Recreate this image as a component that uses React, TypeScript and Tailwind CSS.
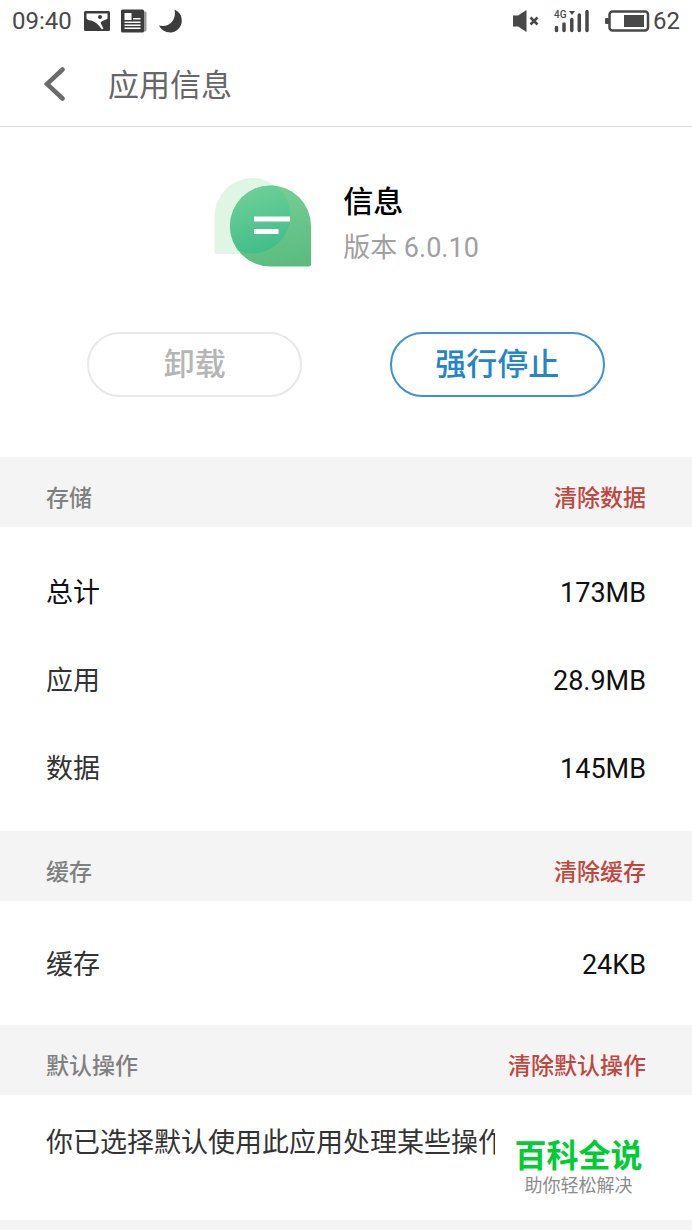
import clsx from 'clsx'
import { ReactNode } from 'react'

type StorageItem = {
  label: string
  value: string
  strong?: boolean
}

const storageItems: StorageItem[] = [
  { label: '总计', value: '173MB', strong: true },
  { label: '应用', value: '28.9MB' },
  { label: '数据', value: '145MB' },
]

const cacheItems: StorageItem[] = [
  { label: '缓存', value: '24KB' },
]

function StatusBar () {
  return (
    <div className="flex h-[42px] items-center justify-between px-3 text-[24px] leading-[42px] text-[#484848]">
      <div className="flex items-center">
        <span>09:40</span>
        <svg className="ml-3" width="26" height="22" viewBox="0 0 26 22" aria-hidden="true">
          <rect x="0" y="1" width="26" height="20" rx="1.5" fill="#3c3c3c" />
          <path d="M2.5 3.5h21v5.300l-6 2.700q-1.200 0.600-0.600 1.900l2.600 5.400-1.800 0.400C14.500 14.500 10.500 11 6.500 10.500q-2.500-0.300-4-1.700z" fill="#fff" />
          <circle cx="16" cy="7" r="2" fill="#3c3c3c" />
        </svg>
        <svg className="ml-[11px]" width="26" height="24" viewBox="0 0 26 24" aria-hidden="true">
          <path d="M22 2.500h2.500a1 1 0 0 1 1 1V21a1.500 1.500 0 0 1-1.500 1.500h-3z" fill="#9b9b9b" />
          <rect x="0" y="0.500" width="23" height="23" rx="1.500" fill="#3c3c3c" />
          <path d="M3.500 4h7v7h-7zM12 9h7.500v1.500H12zM3.500 12.500h16V14h-16zM3.500 15.500h16V17h-16zM3.500 18.500h16V20h-16z" fill="#fff" />
        </svg>
        <svg className="ml-3" width="24" height="24" viewBox="0 0 24 24" aria-hidden="true">
          <path d="M15.500 0.500A12.300 12.300 0 0 1 22.800 11.500A12 12 0 0 1 11.500 23.500C6 23.500 2 20.500 0 16.500C5 17.800 10 16.500 13 12.800C15.800 9.300 16.500 5 15.500 0.500z" fill="#3c3c3c" />
        </svg>
      </div>
      <div className="flex items-center">
        <svg width="27" height="24" viewBox="0 0 27 24" aria-hidden="true">
          <path d="M1 6.500h5L14.500 1v22L6 17.500H1z" fill="#484848" />
          <path d="M18.500 8.500l7 7M25.500 8.500l-7 7" stroke="#484848" strokeWidth="2.500" />
        </svg>
        <svg className="ml-[15px]" width="36" height="24" viewBox="0 0 36 24" aria-hidden="true">
          <text x="0" y="8.500" fontSize="10" fontWeight="500" fill="#484848">4G</text>
          <path d="M15 2h6l-3 4z" fill="#484848" />
          <path d="M2.500 18.500v3M10 15v6.500M17.800 10.500v11M25.300 6v15.500M33 2.500v19" stroke="#484848" strokeWidth="3.500" strokeLinecap="round" />
        </svg>
        <svg className="ml-[15px]" width="45" height="24" viewBox="0 0 45 24" aria-hidden="true">
          <rect x="0" y="9" width="4" height="6" rx="1" fill="#484848" />
          <rect x="4.500" y="2.500" width="38.500" height="19" rx="3" fill="none" stroke="#484848" strokeWidth="2.500" />
          <rect x="19" y="6" width="20" height="12" fill="#484848" />
        </svg>
        <span className="ml-[3px]">62</span>
      </div>
    </div>
  )
}

function MessageLogo () {
  return (
    <svg width="98" height="90" viewBox="0 0 98 90" role="img" aria-label="信息">
      <defs>
        <linearGradient id="bubble" x1="0.3" y1="0" x2="0.6" y2="1">
          <stop offset="0" stopColor="#7dd29b" />
          <stop offset="1" stopColor="#5cbc80" />
        </linearGradient>
        <linearGradient id="overlap" x1="0.3" y1="0" x2="0.6" y2="1">
          <stop offset="0" stopColor="#78d29b" />
          <stop offset="1" stopColor="#41be89" />
        </linearGradient>
        <clipPath id="front">
          <path d="M57.500 7.500a40.500 40.500 0 0 1 40.500 40.500V86.500a2 2 0 0 1-2 2H57.500a40.500 40.500 0 0 1 0-81z" />
        </clipPath>
      </defs>
      <path d="M39.500 0a38 38 0 0 1 0 76H3.500a2 2 0 0 1-2-2V38a38 38 0 0 1 38-38z" fill="#def6e3" />
      <g clipPath="url(#front)">
        <rect width="98" height="90" fill="url(#bubble)" />
        <circle cx="39.500" cy="37.500" r="38" fill="url(#overlap)" />
      </g>
      <path d="M41 38.500h36v5h-36zM41 51h24.500v5H41z" fill="#fff" />
    </svg>
  )
}

function PillButton ({
  children,
  disabled,
}: {
  children: ReactNode
  disabled?: boolean
}) {
  return (
    <button
      type="button"
      disabled={disabled}
      className={clsx(
        'h-[65px] w-[215px] rounded-full border-2 text-[31px] leading-[60px] font-medium',
        disabled ? 'border-[#e8e8e8] text-[#b5b5b5]' : 'border-[#3f92d2] text-[#2484cc]',
      )}
    >
      {children}
    </button>
  )
}

function SectionHeader ({ title, action }: { title: string, action: string }) {
  return (
    <div className="flex h-[70px] items-center justify-between bg-[#f4f4f4] px-[46px] pt-3.5 text-[23px] leading-8 font-medium">
      <h2 className="text-[#808080]">{title}</h2>
      <button type="button" className="text-[#c0463e]">{action}</button>
    </div>
  )
}

function StorageList ({ items, className }: { items: StorageItem[], className?: string }) {
  return (
    <dl className={clsx('px-[46px] text-[27px]', className)}>
      {items.map((item) => (
        <div key={item.label} className="flex h-[88px] items-center justify-between">
          <dt className={item.strong ? 'text-[#111]' : 'text-[#333]'}>{item.label}</dt>
          <dd className="text-[#111]">{item.value}</dd>
        </div>
      ))}
    </dl>
  )
}

export default function App () {
  return (
    <div className="relative min-h-screen overflow-hidden bg-white font-[Roboto,'Noto_Sans_CJK_SC',sans-serif]">
      <StatusBar />
      <header className="flex h-[85px] items-center border-b border-[#dcdcdc] pl-11">
        <button type="button" aria-label="返回">
          <svg width="22" height="34" viewBox="0 0 22 34" fill="none" aria-hidden="true">
            <path d="M18.500 2.500L3 17l15.500 14.500" stroke="#6b6b6b" strokeWidth="4.500" strokeLinecap="round" />
          </svg>
        </button>
        <h1 className="ml-[42px] pt-1 text-[31px] text-[#666]">应用信息</h1>
      </header>

      <main>
        <section className="h-[330px] pt-12">
          <div className="flex items-center justify-center gap-8">
            <MessageLogo />
            <div className="pt-1">
              <div className="text-[30px] leading-[46px] font-medium text-black">信息</div>
              <div className="text-[27px] leading-[46px] text-[#a0a0a0]">版本 6.0.10</div>
            </div>
          </div>
          <div className="mt-[61px] flex justify-evenly">
            <PillButton disabled>卸载</PillButton>
            <PillButton>强行停止</PillButton>
          </div>
        </section>

        <SectionHeader title="存储" action="清除数据" />
        <StorageList items={storageItems} className="pt-[22px] pb-[18px]" />

        <SectionHeader title="缓存" action="清除缓存" />
        <StorageList items={cacheItems} className="pt-5 pb-4" />

        <SectionHeader title="默认操作" action="清除默认操作" />
        <p className="h-[125px] overflow-hidden px-[46px] pt-7 text-[27px] leading-10 whitespace-nowrap text-[#333]">
          你已选择默认使用此应用处理某些操作
        </p>
        <div className="h-2.5 bg-[#f4f4f4]" />
      </main>

      <div className="absolute right-[30px] bottom-4 w-[167px] bg-white pt-5 pb-4 text-center">
        <div className="text-[32px] leading-9 font-bold text-[#0c3]">百科全说</div>
        <div className="text-[18px] leading-6 text-[#8c8c8c]">助你轻松解决</div>
      </div>
    </div>
  )
}
